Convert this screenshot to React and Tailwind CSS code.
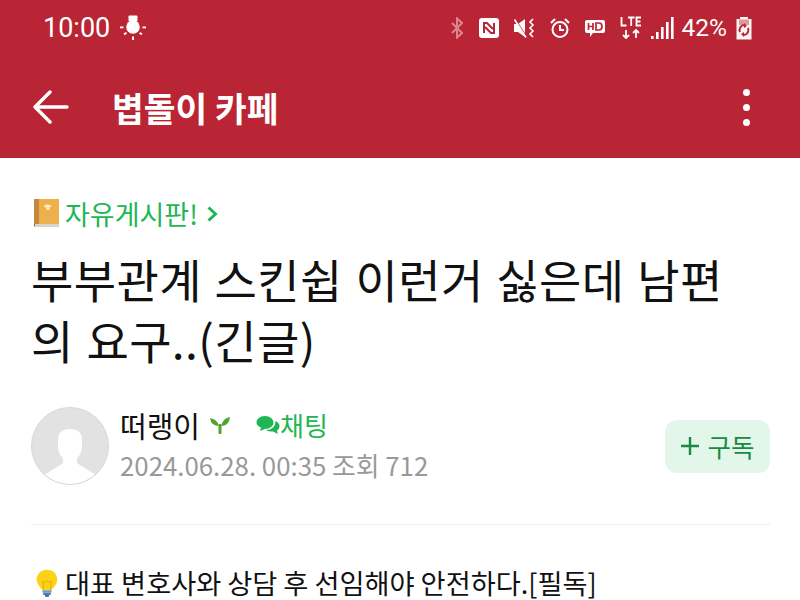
import React from 'react'

const KR = { fontFamily: '"Noto Sans CJK KR", "Noto Sans", sans-serif' }

const BulbStatus = () => (
  <svg width="26" height="26" viewBox="0 0 26 26" fill="white">
    <rect x="8.5" y="0.5" width="9" height="6" rx="1" />
    <circle cx="13" cy="12" r="6.8" />
    <rect x="0" y="11.5" width="3.5" height="1.8" />
    <rect x="22.5" y="11.5" width="3.5" height="1.8" />
    <rect x="12" y="21.5" width="2" height="3.5" />
    <path d="M3.5 18.5 L6 17 L7 18.6 L4.6 20.2 Z M22.5 18.5 L20 17 L19 18.6 L21.4 20.2 Z" />
  </svg>
)

const StatusIcons = () => (
  <div className="flex items-center">
    <svg width="12" height="22" viewBox="0 0 12 22" fill="none" stroke="white" strokeOpacity="0.45" strokeWidth="2" className="mr-[16px]">
      <path d="M1 6 L11 16 L6 20.5 V1.5 L11 6 L1 16" />
    </svg>
    <svg width="20" height="20" viewBox="0 0 20 20" className="mr-[14px]">
      <rect width="20" height="20" rx="3" fill="white" />
      <path d="M5 15 V5 L8 5 L14 11 M15 5 V15 L12 15 L6 9" fill="none" stroke="#b92534" strokeWidth="2" />
    </svg>
    <svg width="23" height="22" viewBox="0 0 23 22" className="mr-[14px]">
      <path d="M1 7 H5 L12 2 V20 L5 15 H1 Z" fill="white" />
      <path d="M1 1 L14 21" stroke="#b92534" strokeWidth="2" />
      <path d="M1.5 2.5 L13 20.5" stroke="white" strokeWidth="1.6" />
      <path d="M20 2 L17 5 L20 8 L17 11 L20 14 L17 17 L20 20" fill="none" stroke="white" strokeWidth="1.6" />
    </svg>
    <svg width="20" height="22" viewBox="0 0 20 22" fill="none" stroke="white" strokeWidth="2" className="mr-[14px]">
      <circle cx="10" cy="12.5" r="7.5" />
      <path d="M10 8 V13 H14" />
      <path d="M1 6 L5 2 M19 6 L15 2" />
    </svg>
    <svg width="22" height="20" viewBox="0 0 22 20" className="mr-[14px]">
      <path d="M3 2 H19 A2 2 0 0 1 21 4 V13 A2 2 0 0 1 19 15 H9 L6 19 V15 H3 A2 2 0 0 1 1 13 V4 A2 2 0 0 1 3 2 Z" fill="white" />
      <path d="M4.5 5 V12 M9 5 V12 M4.5 8.5 H9" stroke="#b92534" strokeWidth="1.7" fill="none" />
      <path d="M12 5 V12 H15 Q18 12 18 8.5 Q18 5 15 5 Z" stroke="#b92534" strokeWidth="1.7" fill="none" />
    </svg>
    <svg width="22" height="24" viewBox="0 0 22 24" fill="none" stroke="white" strokeWidth="1.8" className="mr-[9px]">
      <path d="M1.5 1 V9.5 H6.5 M8 1.5 H14.5 M11.2 1.5 V10 M21 1.5 H16.5 V9.5 H21 M16.5 5.5 H20.5" />
      <path d="M6 14 V22 M3 19 L6 22 L9 19 M16 22 V14 M13 17 L16 14 L19 17" strokeWidth="1.8" />
    </svg>
    <svg width="24" height="24" viewBox="0 0 24 24" fill="white" className="mr-[7px]">
      <rect x="0" y="20" width="2.6" height="3" />
      <rect x="5" y="16" width="2.6" height="7" />
      <rect x="10" y="11" width="2.6" height="12" />
      <rect x="15" y="6" width="2.6" height="17" />
      <rect x="20" y="1" width="2.6" height="22" />
    </svg>
    <span className="text-[24.5px] leading-none text-white mr-[9px]" style={{ fontFamily: 'Roboto, sans-serif' }}>42%</span>
    <svg width="16" height="24" viewBox="0 0 16 24" className="mr-[1px]">
      <path d="M4 1 H12 V3 H15.5 V23.5 H0.5 V3 H4 Z" fill="white" fillOpacity="0.95" />
      <path d="M3 3.5 H13 V9 H3 Z" fill="#b92534" fillOpacity="0.45" />
      <path d="M8 9 A5 5 0 0 0 4 16 M8 19 A5 5 0 0 0 12 12" fill="none" stroke="#b92534" strokeWidth="2" />
      <path d="M8 7 L11 10 L8 12 Z M8 21 L5 18 L8 16 Z" fill="#b92534" />
    </svg>
  </div>
)

const BookEmoji = () => (
  <svg width="25" height="30" viewBox="0 0 25 30">
    <rect x="0" y="1" width="25" height="28" rx="1.5" fill="#8d7350" />
    <rect x="1" y="26" width="24" height="3" fill="#d9d5cd" />
    <rect x="5" y="1" width="20" height="25" fill="#eeb04a" />
    <rect x="0" y="1" width="5" height="25" fill="#c5863d" />
    <path d="M9.5 8 Q13.5 5 18 8 Q13.5 12 9.5 8 Z" fill="#fbeccb" />
    <rect x="12.5" y="10" width="3" height="2" fill="#fbeccb" />
  </svg>
)

const Sprout = () => (
  <svg width="20" height="18" viewBox="0 0 20 18" fill="#4fa62c">
    <path d="M9 10 Q7 3 0 2 Q1 10 9 10 Z" />
    <path d="M11 10 Q13 2 20 1 Q19 10 11 10 Z" />
    <rect x="8.5" y="8" width="3" height="10" rx="1" />
  </svg>
)

const ChatBubbles = () => (
  <svg width="24" height="20" viewBox="0 0 24 20" fill="#1fb655">
    <path d="M9 1 C14 1 17.5 4 17.5 7.5 C17.5 11 14 14 9 14 L4 16 L5 12.5 C2.5 11.5 0.5 10 0.5 7.5 C0.5 4 4 1 9 1 Z" />
    <path d="M19.5 6 C22 7 23.5 9 23.5 11 C23.5 13 22.5 14.5 21 15.5 L22 19 L17 16.5 C14 16.5 11.5 16 10 15 C15 15 19.5 12 19.5 6 Z" />
  </svg>
)

const Avatar = () => (
  <div className="w-[78px] h-[78px] rounded-full bg-[#e2e2e2] border border-[#d8d8d8] overflow-hidden shrink-0">
    <svg width="76" height="76" viewBox="0 0 76 76" fill="white">
      <path d="M26 32 Q26 21 38 21 Q50 21 50 32 L50 40 Q49 47 45 50 L45 55 Q52 60 66 68 L60 76 L16 76 L10 68 Q24 60 31 55 L31 50 Q27 47 26 40 Z" />
    </svg>
  </div>
)

const BulbEmoji = () => (
  <svg width="24" height="32" viewBox="0 0 28 33">
    <path d="M14 1 C21 1 26 6 26 12.5 C26 17 23.5 19.5 21 22.5 L19.5 25 H8.5 L7 22.5 C4.5 19.5 2 17 2 12.5 C2 6 7 1 14 1 Z" fill="#fcd116" />
    <path d="M10 24 L9 14 M18 24 L19 14 M9 14 L12 16 L14 14 L16 16 L19 14" fill="none" stroke="#e8a010" strokeWidth="1" />
    <rect x="8.5" y="25" width="11" height="3" rx="1" fill="#6f9fc8" />
    <rect x="9.5" y="28" width="9" height="2.5" rx="1" fill="#4f7fa8" />
    <rect x="11.5" y="30.5" width="5" height="2" rx="1" fill="#3c5f80" />
  </svg>
)

export default function App() {
  return (
    <div className="w-[800px] h-[600px] overflow-hidden bg-white" style={KR}>
      <div className="h-[158px] bg-[#b92534] flex flex-col">
        <div className="h-[56px] flex items-center justify-between pl-[43px] pr-[47px]">
          <div className="flex items-center gap-[10px]">
            <span className="text-[27px] leading-none text-white" style={{ fontFamily: 'Roboto, sans-serif' }}>10:00</span>
            <BulbStatus />
          </div>
          <StatusIcons />
        </div>
        <div className="flex-1 flex items-center justify-between pl-[33px] pr-[50px]">
          <div className="flex items-center gap-[43px]">
            <svg width="36" height="34" viewBox="0 0 36 34" fill="none" stroke="white" strokeWidth="3.4" strokeLinecap="round" strokeLinejoin="round">
              <path d="M2 17 H34 M17 2 L2 17 L17 32" />
            </svg>
            <h1 className="text-[34.5px] leading-none font-bold text-white">볍돌이 카페</h1>
          </div>
          <div className="flex flex-col gap-[8px]">
            <span className="w-[7px] h-[7px] rounded-full bg-white" />
            <span className="w-[7px] h-[7px] rounded-full bg-white" />
            <span className="w-[7px] h-[7px] rounded-full bg-white" />
          </div>
        </div>
      </div>

      <div className="pl-[31px] pr-[30px]">
        <div className="flex items-center mt-[40px] h-[30px] pl-[3px]">
          <BookEmoji />
          <span className="ml-[6px] text-[27px] leading-none text-[#1fb655]">자유게시판!</span>
          <svg width="11" height="16" viewBox="0 0 11 16" fill="none" stroke="#1fb655" strokeWidth="3" className="ml-[9px] mt-[1px]">
            <path d="M1.5 1.5 L8.5 8 L1.5 14.5" />
          </svg>
        </div>

        <h2 className="mt-[20px] text-[46px] leading-[61px] tracking-[0.4px] text-[#111] font-normal whitespace-nowrap [word-spacing:2px]">
          부부관계 스킨쉽 이런거 싫은데 남편<br />의 요구..(긴글)
        </h2>

        <div className="mt-[37px] flex items-center justify-between">
          <div className="flex items-center gap-[11px]">
            <Avatar />
            <div className="mt-[-3px]">
              <div className="flex items-center h-[38px]">
                <span className="text-[29px] leading-none text-[#111]">떠랭이</span>
                <span className="ml-[10px]"><Sprout /></span>
                <span className="ml-[26px]"><ChatBubbles /></span>
                <span className="text-[26px] leading-none text-[#1fb655]">채팅</span>
              </div>
              <div className="mt-[3px] text-[25.8px] leading-[36px] text-[#999]">
                2024.06.28. 00:35 조회 712
              </div>
            </div>
          </div>
          <button className="w-[105px] h-[53px] rounded-[12px] bg-[#e2f7ea] flex items-center justify-center gap-[9px] text-[#188a44]">
            <svg width="18" height="18" viewBox="0 0 18 18" stroke="currentColor" strokeWidth="2.4">
              <path d="M9 0 V18 M0 9 H18" />
            </svg>
            <span className="text-[25.5px] leading-none">구독</span>
          </button>
        </div>

        <div className="mt-[39px] border-t border-[#eeeeee]" />

        <div className="mt-[42px] flex items-center pl-[4px]">
          <BulbEmoji />
          <span className="ml-[6px] text-[27.2px] leading-none text-[#111] whitespace-nowrap">대표 변호사와 상담 후 선임해야 안전하다.[필독]</span>
        </div>
      </div>
    </div>
  )
}
